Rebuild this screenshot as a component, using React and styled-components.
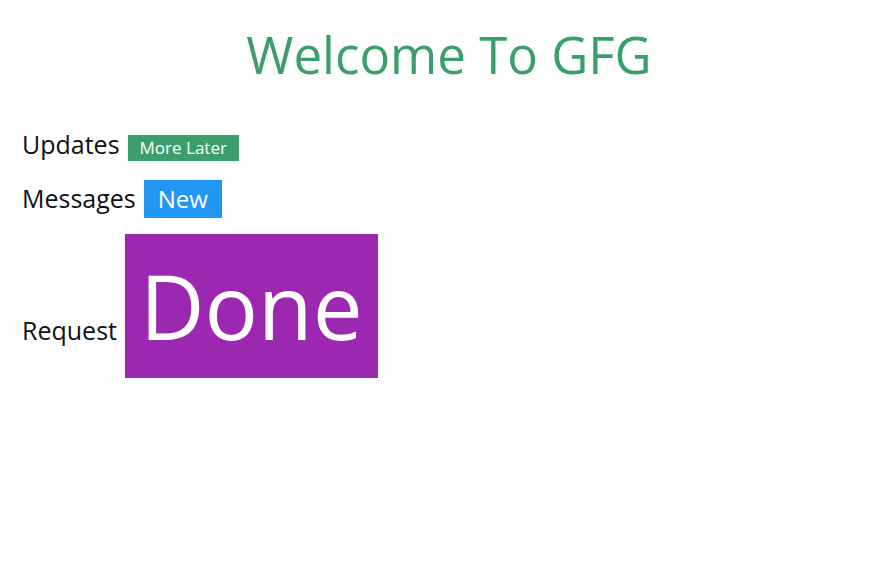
import React from "react";
import styled, { createGlobalStyle } from "styled-components";

const GlobalStyle = createGlobalStyle`
  html, body {
    margin: 0;
    padding: 0;
    background: #fff;
  }
  body {
    font-family: "Open Sans", "Noto Sans", sans-serif;
    color: #111;
  }
`;

const Page = styled.div`
  padding: 0 22px;
`;

const Title = styled.h1`
  margin: 0;
  padding: 22px 0 0 6px;
  text-align: center;
  font-size: 51px;
  font-weight: 400;
  line-height: 64px;
  color: #3a9f6b;
`;

const Row = styled.div`
  display: flex;
  align-items: baseline;
  gap: 8px;
  margin-top: ${(p) => p.$top}px;
`;

const Label = styled.span`
  font-size: 25px;
  line-height: 1.2;
`;

const Tag = styled.span`
  display: inline-block;
  color: #fff;
  background: ${(p) => p.$bg};
  font-size: ${(p) => p.$size}px;
  line-height: ${(p) => p.$height}px;
  padding: 0 ${(p) => p.$pad}px;
  text-align: center;
`;

export default function App() {
  return (
    <>
      <GlobalStyle />
      <Page>
        <Title>Welcome To GFG</Title>
        <Row $top={43}>
          <Label>Updates</Label>
          <Tag $bg="#3a9f6b" $size={17} $height={26} $pad={12}>
            More Later
          </Tag>
        </Row>
        <Row $top={19}>
          <Label>Messages</Label>
          <Tag $bg="#2196f3" $size={24} $height={38} $pad={14}>
            New
          </Tag>
        </Row>
        <Row $top={16}>
          <Label>Request</Label>
          <Tag $bg="#9c27b0" $size={89} $height={144} $pad={15}>
            Done
          </Tag>
        </Row>
      </Page>
    </>
  );
}
